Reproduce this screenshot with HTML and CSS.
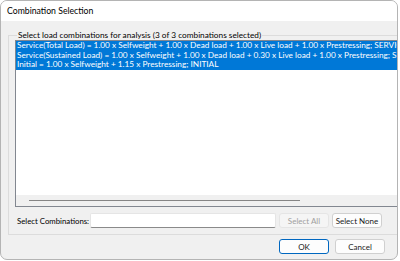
FILE: index.html
```
<!DOCTYPE html>
<html lang="en">
<head>
    <meta charset="UTF-8">
    <title>Combination Selection</title>
    <link rel="stylesheet" href="styles.css">
</head>
<body>
    <div class="dialog">
        <div class="titlebar">Combination Selection</div>
        <div class="content">
            <fieldset class="group">
                <legend>Select load combinations for analysis (3 of 3 combinations selected)</legend>
                <div class="listbox">
                    <ul class="items">
                        <li class="selected">Service(Total Load) = 1.00 x Selfweight + 1.00 x Dead load + 1.00 x Live load + 1.00 x Prestressing; SERVICE</li>
                        <li class="selected">Service(Sustained Load) = 1.00 x Selfweight + 1.00 x Dead load + 0.30 x Live load + 1.00 x Prestressing; SERVICE</li>
                        <li class="selected">Initial = 1.00 x Selfweight + 1.15 x Prestressing; INITIAL</li>
                    </ul>
                    <div class="hscroll"><span class="thumb"></span></div>
                </div>
                <div class="filter">
                    <label class="filter-label">Select Combinations:</label>
                    <input class="filter-input" type="text">
                    <button class="btn" disabled>Select All</button>
                    <button class="btn">Select None</button>
                </div>
            </fieldset>
            <div class="actions">
                <button class="btn btn-default">OK</button>
                <button class="btn">Cancel</button>
            </div>
        </div>
    </div>
</body>
</html>
```

FILE: styles.css
```
* {
    margin: 0;
    padding: 0;
    box-sizing: border-box;
}
body {
    width: 400px;
    height: 261px;
    background-color: #fff;
    font-family: Lato, "Open Sans", sans-serif;
    font-size: 8.25px;
    color: #000;
}
.dialog {
    width: 398px;
    height: 260px;
    border: 1px solid #b4b4b4;
    border-radius: 7px;
    overflow: hidden;
    display: flex;
    flex-direction: column;
    background-color: #f0f0f0;
}
.titlebar {
    height: 20px;
    background-color: #fff;
    padding-left: 6px;
    line-height: 20px;
    font-size: 8.7px;
}
.content {
    flex: 1;
    padding: 9px 6px 0 7px;
    display: flex;
    flex-direction: column;
}
.group {
    border: 1px solid #dcdcdc;
    height: 205px;
    padding: 0 6px 0 6px;
    display: flex;
    flex-direction: column;
}
.group legend {
    margin-left: 2px;
    padding: 0 1px;
    line-height: 10px;
    color: #000;
}
.listbox {
    height: 167px;
    border: 1px solid #828790;
    background-color: #fff;
    display: flex;
    flex-direction: column;
}
.items {
    flex: 1;
    list-style: none;
    overflow: hidden;
}
.items li {
    height: 9.6px;
    line-height: 9.6px;
    padding-left: 1px;
    white-space: nowrap;
    overflow: hidden;
}
.items li.selected {
    background-color: #0078d7;
    color: #fff;
}
.hscroll {
    height: 11px;
    background-color: #f0f0f0;
    padding: 5px 0 0 13px;
}
.hscroll .thumb {
    display: block;
    width: 271px;
    height: 1px;
    background-color: #858585;
}
.filter {
    display: flex;
    align-items: center;
    margin-top: 6px;
    height: 15px;
}
.filter-label {
    width: 75px;
    padding-left: 2px;
    font-size: 7.8px;
    white-space: nowrap;
}
.filter-input {
    width: 186px;
    height: 15px;
    border: 1px solid #e5e5e5;
    border-bottom-color: #8a8a8a;
    border-radius: 2px;
    background-color: #fff;
    margin-right: 3px;
}
.btn {
    width: 50px;
    height: 15px;
    padding: 0;
    border: 1px solid #d0d0d0;
    border-radius: 3px;
    background-color: #fdfdfd;
    font-family: inherit;
    font-size: 8px;
    color: #1a1a1a;
    white-space: nowrap;
}
.btn + .btn {
    margin-left: 3px;
}
.btn:disabled {
    background-color: #f5f5f5;
    border-color: #e5e5e5;
    color: #a0a0a0;
}
.actions {
    display: flex;
    justify-content: flex-end;
    padding: 4px 6px 0 0;
}
.actions .btn + .btn {
    margin-left: 6px;
}
.btn-default {
    border-color: #0067c0;
}
```
